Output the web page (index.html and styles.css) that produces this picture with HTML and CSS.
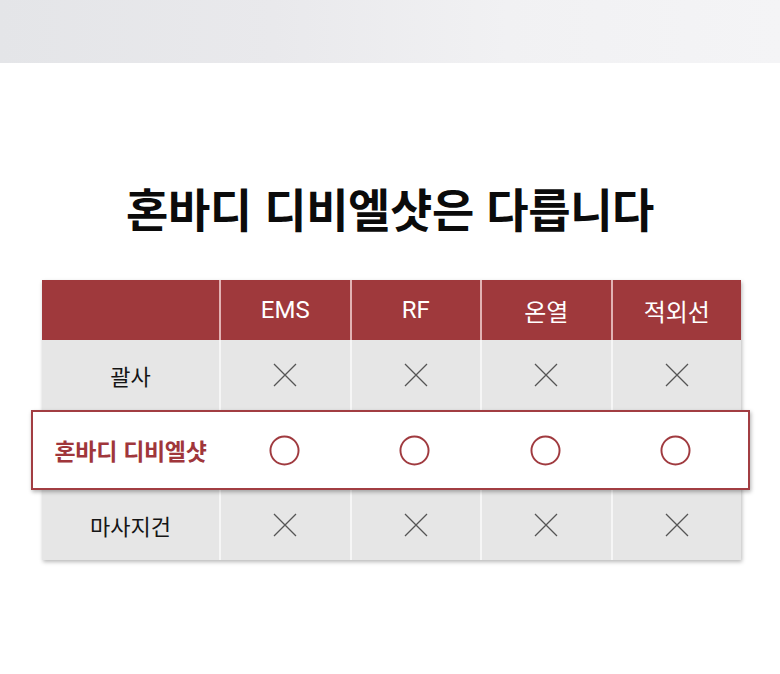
FILE: index.html
```html
<!DOCTYPE html>
<html lang="ko">
<head>
<meta charset="utf-8">
<title>혼바디 디비엘샷</title>
<link rel="stylesheet" href="styles.css">
</head>
<body>
<div class="banner"></div>
<h1 class="title">혼바디 디비엘샷은 다릅니다</h1>
<div class="table">
  <div class="row head">
    <div class="cell"></div>
    <div class="cell">EMS</div>
    <div class="cell">RF</div>
    <div class="cell">온열</div>
    <div class="cell">적외선</div>
  </div>
  <div class="row body">
    <div class="cell label">괄사</div>
    <div class="cell"><svg class="x" viewBox="0 0 24 24"><path d="M1 1L23 23M23 1L1 23"/></svg></div>
    <div class="cell"><svg class="x" viewBox="0 0 24 24"><path d="M1 1L23 23M23 1L1 23"/></svg></div>
    <div class="cell"><svg class="x" viewBox="0 0 24 24"><path d="M1 1L23 23M23 1L1 23"/></svg></div>
    <div class="cell"><svg class="x" viewBox="0 0 24 24"><path d="M1 1L23 23M23 1L1 23"/></svg></div>
  </div>
  <div class="row hl">
    <div class="cell label">혼바디 디비엘샷</div>
    <div class="cell"><svg class="o" viewBox="0 0 32 32"><circle cx="16" cy="16" r="14.5"/></svg></div>
    <div class="cell"><svg class="o" viewBox="0 0 32 32"><circle cx="16" cy="16" r="14.5"/></svg></div>
    <div class="cell"><svg class="o" viewBox="0 0 32 32"><circle cx="16" cy="16" r="14.5"/></svg></div>
    <div class="cell"><svg class="o" viewBox="0 0 32 32"><circle cx="16" cy="16" r="14.5"/></svg></div>
  </div>
  <div class="row body">
    <div class="cell label">마사지건</div>
    <div class="cell"><svg class="x" viewBox="0 0 24 24"><path d="M1 1L23 23M23 1L1 23"/></svg></div>
    <div class="cell"><svg class="x" viewBox="0 0 24 24"><path d="M1 1L23 23M23 1L1 23"/></svg></div>
    <div class="cell"><svg class="x" viewBox="0 0 24 24"><path d="M1 1L23 23M23 1L1 23"/></svg></div>
    <div class="cell"><svg class="x" viewBox="0 0 24 24"><path d="M1 1L23 23M23 1L1 23"/></svg></div>
  </div>
</div>
</body>
</html>
```
FILE: styles.css
```css
* { box-sizing: border-box; }
html, body { margin: 0; padding: 0; background: #fff; }
body {
  font-family: Roboto, "Noto Sans CJK KR", sans-serif;
  color: #111;
  width: 780px;
  height: 674px;
  overflow: hidden;
}
.banner {
  height: 63px;
  background: linear-gradient(90deg, #e4e5e8 0%, #e9e9ec 35%, #f1f1f3 65%, #f4f4f6 100%);
}
.title {
  margin: 121px 0 0;
  font-family: "Noto Sans CJK KR", sans-serif;
  font-weight: 700;
  font-size: 46px;
  line-height: 46px;
  text-align: center;
  color: #0b0b0b;
  letter-spacing: -0.4px;
}
.table {
  width: 699px;
  margin: 50px 0 0 42px;
  box-shadow: 1px 2px 4px rgba(0, 0, 0, 0.28);
  background: #e6e6e6;
}
.row {
  display: grid;
  grid-template-columns: 177px repeat(4, 1fr);
}
.cell {
  display: flex;
  align-items: center;
  justify-content: center;
  font-size: 22px;
}
.head {
  height: 60px;
  background: #9f393c;
  color: #fff;
}
.head .cell + .cell { border-left: 2px solid rgba(255, 230, 230, 0.7); }
.head .cell {
  font-family: Roboto, "Noto Sans CJK KR", sans-serif;
  font-size: 24px;
}
.body { height: 70px; background: #e6e6e6; }
.body .cell + .cell { border-left: 2px solid #f6f6f6; }
.label {
  font-family: "Noto Sans CJK KR", sans-serif;
  color: #151515;
}
.hl {
  position: relative;
  z-index: 1;
  height: 80px;
  margin: 0 -9px 0 -11px;
  padding: 0 7px 0 9px;
  border: 2px solid #a23d42;
  background: #fff;
  box-shadow: 1px 2px 4px rgba(0, 0, 0, 0.3);
}
.hl .label {
  color: #a0363b;
  font-weight: 700;
  font-size: 23px;
  letter-spacing: -0.3px;
}
.x { width: 24px; height: 24px; }
.x path { stroke: #555; stroke-width: 1.3; fill: none; }
.o { width: 31px; height: 31px; }
.o circle { stroke: #a03a3f; stroke-width: 2; fill: none; }
```
